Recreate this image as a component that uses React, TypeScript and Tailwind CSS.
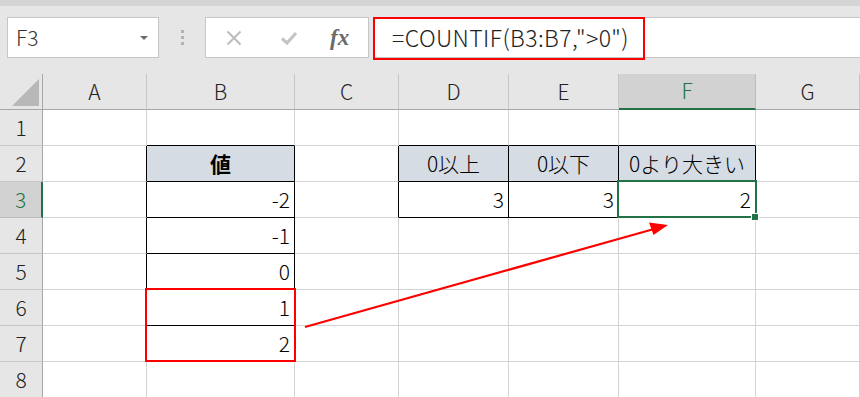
import React from 'react';

const COLS = ['A', 'B', 'C', 'D', 'E', 'F', 'G'];
// widths include the 1px right gridline
const COL_W = [104, 148, 104, 110, 110, 137, 104];
const ROWS = [1, 2, 3, 4, 5, 6, 7, 8];

type Cell = { text: string; align?: 'right' | 'center'; head?: boolean; bold?: boolean };

const DATA: Record<string, Cell> = {
  B2: { text: '値', align: 'center', head: true, bold: true },
  B3: { text: '-2' },
  B4: { text: '-1' },
  B5: { text: '0' },
  B6: { text: '1' },
  B7: { text: '2' },
  D2: { text: '0以上', align: 'center', head: true },
  E2: { text: '0以下', align: 'center', head: true },
  F2: { text: '0より大きい', align: 'center', head: true },
  D3: { text: '3' },
  E3: { text: '3' },
  F3: { text: '2' },
};

// cells that carry a thin black table border
function inTable(c: number, r: number) {
  if (c === 1 && r >= 2 && r <= 7) return true;
  if (c >= 3 && c <= 5 && r >= 2 && r <= 3) return true;
  return false;
}

function NameBox() {
  return (
    <div className="w-[152px] h-[41px] bg-white border border-[#c6c6c6] flex items-center justify-between pl-[8px] pr-[10px]">
      <span className="text-[21px] text-[#333] leading-none">F3</span>
      <span className="w-0 h-0 border-l-[4px] border-r-[4px] border-t-[4px] border-l-transparent border-r-transparent border-t-[#6b6b6b]" />
    </div>
  );
}

function FormulaIcons() {
  return (
    <div className="w-[164px] h-[41px] bg-white border border-[#c6c6c6] flex items-center">
      <svg width="18" height="18" viewBox="0 0 18 18" className="ml-[19px]">
        <path d="M2.5 2.5L15.5 15.5M15.5 2.5L2.5 15.5" stroke="#bdbdbd" strokeWidth="2" />
      </svg>
      <svg width="20" height="18" viewBox="0 0 20 18" className="ml-[36px]">
        <path d="M3 9.5L8 14L17 4" stroke="#c4c4c4" strokeWidth="3.2" fill="none" />
      </svg>
      <span className="ml-[31px] font-['Liberation_Serif',serif] italic font-bold text-[23px] text-[#6a6a6a] leading-none">
        fx
      </span>
    </div>
  );
}

function FormulaInput() {
  return (
    <div className="relative flex-1 h-[41px] bg-white border-y border-[#c6c6c6] flex items-center pl-[19px]">
      <span className="text-[23px] text-[#222] leading-none tracking-[0.4px]">=COUNTIF(B3:B7,"&gt;0")</span>
      <div className="absolute left-0 top-[-1px] w-[272px] h-[43px] border-2 border-[#ff0000]" />
    </div>
  );
}

function HeaderRow() {
  return (
    <div className="flex h-[36px]">
      <div className="w-[43px] h-full border-r border-b border-[#a6a6a6] flex items-end justify-end pr-[3px] pb-[3px]">
        <svg width="27" height="27" viewBox="0 0 27 27">
          <path d="M27 0L27 27L0 27Z" fill="#b8b8b8" />
        </svg>
      </div>
      {COLS.map((c, i) => {
        const sel = c === 'F';
        return (
          <div
            key={c}
            style={{ width: COL_W[i] }}
            className={
              sel
                ? 'h-full shrink-0 bg-[#d2d2d2] border-r border-r-[#bdbdbd] border-b-2 border-b-[#217346] flex items-center justify-center text-[21px] text-[#217346]'
                : 'h-full shrink-0 border-r border-r-[#c6c6c6] border-b border-b-[#a6a6a6] flex items-center justify-center text-[21px] text-[#222]'
            }
          >
            {c}
          </div>
        );
      })}
    </div>
  );
}

function GridRow({ r }: { r: number }) {
  const sel = r === 3;
  return (
    <div className="flex h-[36px]">
      <div
        className={
          sel
            ? 'w-[43px] h-full shrink-0 bg-[#d2d2d2] border-r-2 border-r-[#217346] border-b border-b-[#bdbdbd] flex items-center justify-center text-[21px] text-[#217346]'
            : 'w-[43px] h-full shrink-0 border-r border-r-[#a6a6a6] border-b border-b-[#c6c6c6] flex items-center justify-center text-[21px] text-[#222]'
        }
      >
        {r}
      </div>
      {COLS.map((c, i) => {
        const cell = DATA[c + r];
        const right = inTable(i, r) || inTable(i + 1, r);
        const bottom = inTable(i, r) || inTable(i, r + 1);
        return (
          <div
            key={c}
            style={{ width: COL_W[i] }}
            className={[
              'h-full shrink-0 flex items-center text-[21px] text-black border-r border-b whitespace-nowrap',
              right ? 'border-r-black' : 'border-r-[#d4d4d4]',
              bottom ? 'border-b-black' : 'border-b-[#d4d4d4]',
              cell?.head ? 'bg-[#d6dce4]' : 'bg-white',
              cell?.align === 'center' ? 'justify-center' : 'justify-end pr-[4px]',
              cell?.bold ? 'font-bold' : '',
            ].join(' ')}
          >
            {cell?.text}
          </div>
        );
      })}
    </div>
  );
}

export default function App() {
  return (
    <div className="relative w-[860px] h-[397px] overflow-hidden bg-[#e6e6e6] font-light font-['Noto_Sans_CJK_JP',sans-serif]">
      <div className="h-[6px] bg-[#d4d4d4]" />

      {/* name box + formula bar */}
      <div className="h-[68px] flex items-start pt-[11px]">
        <div className="ml-[7px]">
          <NameBox />
        </div>
        <div className="w-[46px] h-[41px] flex flex-col items-center justify-center gap-[3px]">
          <span className="w-[3px] h-[3px] bg-[#b3b3b3]" />
          <span className="w-[3px] h-[3px] bg-[#b3b3b3]" />
          <span className="w-[3px] h-[3px] bg-[#b3b3b3]" />
        </div>
        <FormulaIcons />
        <div className="w-[4px]" />
        <FormulaInput />
      </div>

      {/* sheet */}
      <div className="relative">
        <HeaderRow />
        {ROWS.map((r) => (
          <GridRow key={r} r={r} />
        ))}

        {/* active cell F3 */}
        <div className="absolute left-[617px] top-[106px] w-[140px] h-[38px] border-2 border-[#217346]" />
        <div className="absolute left-[751px] top-[139px] w-[8px] h-[8px] bg-[#217346] border border-white" />

        {/* B6:B7 highlight */}
        <div className="absolute left-[145px] top-[214px] w-[151px] h-[74px] border-2 border-[#ff0000]" />
      </div>

      <svg className="absolute inset-0 pointer-events-none" width="860" height="397" viewBox="0 0 860 397">
        <line x1="305" y1="327" x2="654" y2="229" stroke="#ff0000" strokeWidth="2.2" />
        <path d="M668 225L649 222.5L653.5 235Z" fill="#ff0000" />
      </svg>
    </div>
  );
}
